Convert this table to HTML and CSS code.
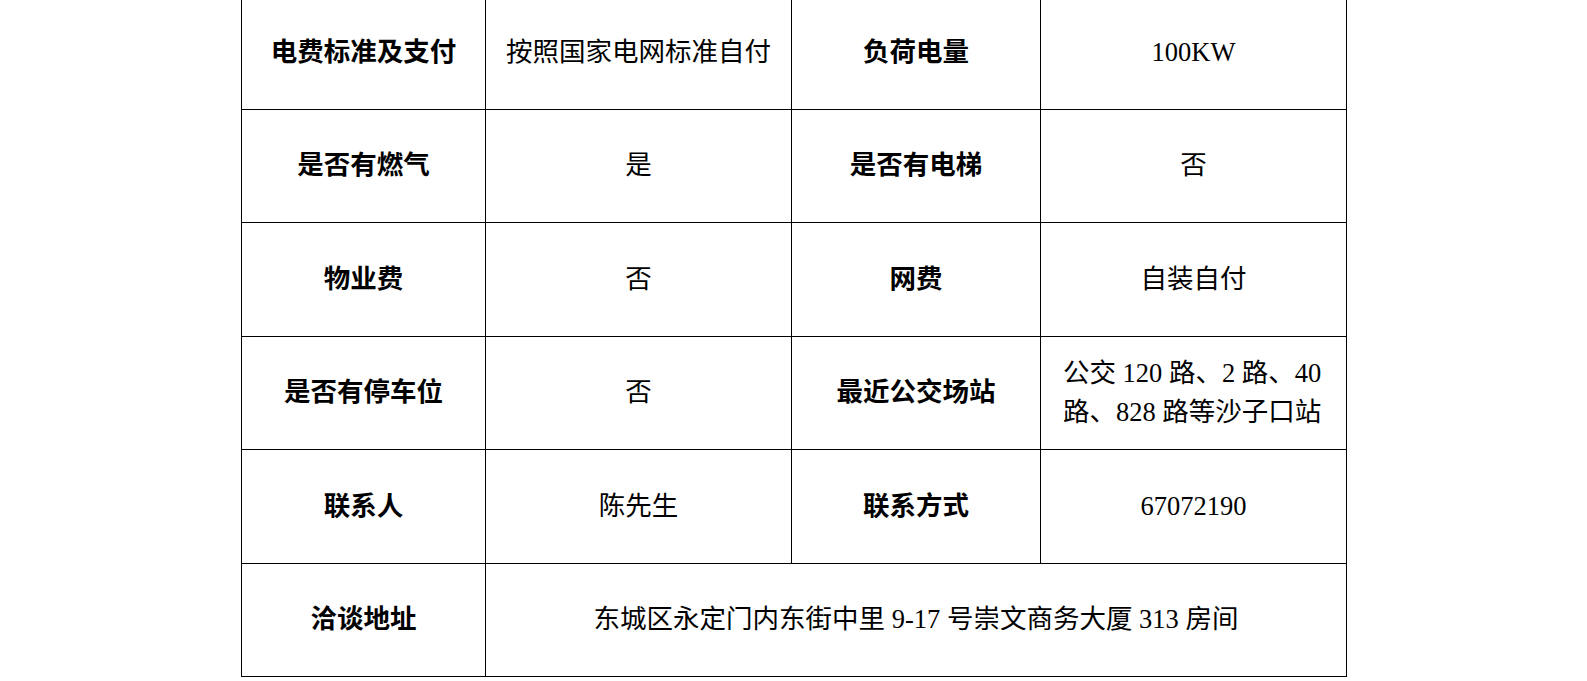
FILE: index.html
```html
<!DOCTYPE html>
<html lang="zh-CN">
<head>
<meta charset="utf-8">
<title>房屋信息</title>
<link rel="stylesheet" href="styles.css">
</head>
<body>
<div class="page">
  <table class="info">
    <colgroup>
      <col class="c1"><col class="c2"><col class="c3"><col class="c4">
    </colgroup>
    <tbody>
      <tr>
        <th>电费标准及支付</th>
        <td>按照国家电网标准自付</td>
        <th>负荷电量</th>
        <td>100KW</td>
      </tr>
      <tr>
        <th>是否有燃气</th>
        <td>是</td>
        <th>是否有电梯</th>
        <td>否</td>
      </tr>
      <tr>
        <th>物业费</th>
        <td>否</td>
        <th>网费</th>
        <td>自装自付</td>
      </tr>
      <tr>
        <th>是否有停车位</th>
        <td>否</td>
        <th>最近公交场站</th>
        <td class="left">公交 120 路、2 路、40<br>路、828 路等沙子口站</td>
      </tr>
      <tr>
        <th>联系人</th>
        <td>陈先生</td>
        <th>联系方式</th>
        <td>67072190</td>
      </tr>
      <tr>
        <th>洽谈地址</th>
        <td colspan="3">东城区永定门内东街中里 9-17 号崇文商务大厦 313 房间</td>
      </tr>
    </tbody>
  </table>
</div>
</body>
</html>
```

FILE: styles.css
```css
html, body {
  margin: 0;
  padding: 0;
  background: #fff;
}

.page {
  padding-left: 241px;
  margin-top: -5px;
}

.info {
  border-collapse: collapse;
  table-layout: fixed;
  width: 1105px;
  font-family: "Liberation Serif", "Noto Sans CJK SC", serif;
  font-size: 26.5px;
  color: #000;
}

.c1 { width: 244px; }
.c2 { width: 306px; }
.c3 { width: 249px; }
.c4 { width: 306px; }

.info th,
.info td {
  border: 1.5px solid #000;
  height: 113.5px;
  padding: 0 16px;
  text-align: center;
  vertical-align: middle;
  box-sizing: border-box;
  line-height: 1.48;
}

.info th {
  font-weight: 700;
}

.info td {
  font-weight: 400;
}

.info td.left {
  text-align: left;
  padding-left: 22px;
  padding-right: 6px;
}
```
